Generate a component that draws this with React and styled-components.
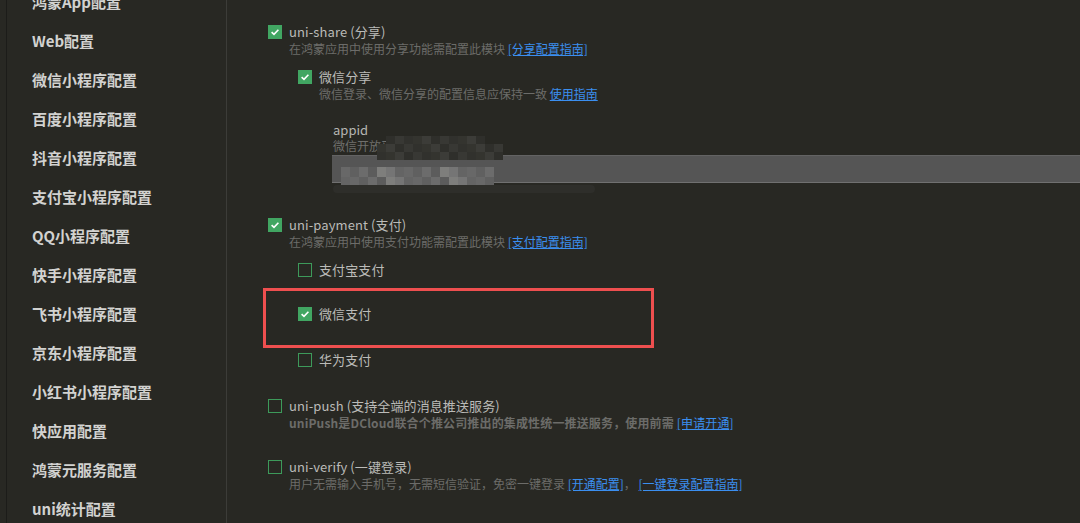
import React from "react"
import styled, { createGlobalStyle } from "styled-components"

const GlobalStyle = createGlobalStyle`
  html, body {
    margin: 0;
    padding: 0;
    background: #282823;
    overflow: hidden;
  }
  * {
    box-sizing: border-box;
  }
`

const font = `"Noto Sans CJK SC", "Noto Sans", "Liberation Sans", sans-serif`

const Page = styled.div`
  display: flex;
  height: 523px;
  width: 1080px;
  overflow: hidden;
  padding-left: 6px;
  background: #282823;
  font-family: ${font};
`

const Sidebar = styled.nav`
  width: 221px;
  flex-shrink: 0;
  border-left: 1px solid #1c1c19;
  border-right: 1px solid #3c3c38;
  padding-left: 25px;
  overflow: hidden;
`

const NavList = styled.ul`
  list-style: none;
  margin: -18px 0 0;
  padding: 0;
`

const NavItem = styled.li`
  height: 39px;
  line-height: 39px;
  font-size: 15px;
  font-weight: 700;
  color: #d2d2d0;
  white-space: nowrap;
`

const Content = styled.main`
  flex: 1;
  padding: 24px 0 0 41px;
  overflow: hidden;
`

const Block = styled.section`
  margin-top: ${p => p.$top || 0}px;
  margin-left: ${p => p.$indent || 0}px;
`

const Row = styled.div`
  display: flex;
  align-items: center;
  gap: 7px;
  height: 16px;
`

const Box = styled.span`
  width: 14px;
  height: 14px;
  flex-shrink: 0;
  display: inline-flex;
  align-items: center;
  justify-content: center;
  background: ${p => (p.$checked ? "#41a662" : "transparent")};
  border: 1px solid ${p => (p.$checked ? "#41a662" : "#3d9a5a")};
`

const Label = styled.span`
  font-size: 13px;
  line-height: 16px;
  color: #bbbbb8;
  white-space: nowrap;
  letter-spacing: 0.1px;
`

const Desc = styled.div`
  margin-left: 21px;
  font-size: 12px;
  line-height: 18px;
  color: #6c6c69;
  font-weight: ${p => (p.$bold ? 700 : 400)};
  letter-spacing: ${p => (p.$bold ? "0.15px" : "0")};
  white-space: nowrap;
`

const DocLink = styled.a`
  color: #3b8ff0;
  text-decoration: underline;
  font-weight: 400;
  cursor: pointer;
`

const Field = styled.div`
  position: relative;
  margin: 19px 0 0 35px;
`

const FieldLabel = styled.div`
  font-size: 13px;
  line-height: 16px;
  color: #b5b5b2;
`

const FieldHint = styled.div`
  font-size: 12px;
  line-height: 16px;
  color: #6f6f6c;
`

const Input = styled.div`
  margin-top: 1px;
  margin-left: -1px;
  height: 28px;
  width: 760px;
  background: #555555;
  border-top: 1px solid #636363;
  border-bottom: 1px solid #707070;
`

const Mosaic = styled.svg`
  position: absolute;
  left: -1px;
  top: 12px;
  pointer-events: none;
`

const Highlight = styled.div`
  margin: 10px 0 0 -35px;
  width: 391px;
  border: 3px solid #ee4f4f;
  padding: 15px 0 23px 32px;
`

const Check = () => (
  <svg width="10" height="10" viewBox="0 0 10 10">
    <polyline
      points="1.6,5.2 4,7.4 8.4,2.8"
      fill="none"
      stroke="#ffffff"
      strokeWidth="1.6"
    />
  </svg>
)

const Checkbox = ({ checked }) => (
  <Box $checked={checked}>{checked && <Check />}</Box>
)

const Option = ({ checked, label, top, indent, children }) => (
  <Block $top={top} $indent={indent}>
    <Row>
      <Checkbox checked={checked} />
      <Label>{label}</Label>
    </Row>
    {children}
  </Block>
)

const navItems = [
  "鸿蒙App配置",
  "Web配置",
  "微信小程序配置",
  "百度小程序配置",
  "抖音小程序配置",
  "支付宝小程序配置",
  "QQ小程序配置",
  "快手小程序配置",
  "飞书小程序配置",
  "京东小程序配置",
  "小红书小程序配置",
  "快应用配置",
  "鸿蒙元服务配置",
  "uni统计配置",
]

// pixelated blur over the appid value
const cells = []
const shades = ["#2f2f2b", "#34342f", "#383834", "#3c3c38", "#31312d"]
const light = ["#5c5c5c", "#646464", "#6c6c6c", "#757575", "#606060", "#7e7e7c", "#686868"]
for (let r = 0; r < 5; r++) {
  for (let c = 0; c < 18; c++) {
    const x = 9 + c * 9
    if (r < 3) {
      if (r === 0 && (x < 50 || x > 150)) continue
      if (r > 0 && x < 42) continue
      cells.push({ x, y: r * 8, h: 8, fill: shades[(c * 7 + r * 3) % shades.length] })
    } else {
      if (x > 155) continue
      cells.push({ x, y: 31 + (r - 3) * 10, h: 10, fill: light[(c * 5 + r * 2) % light.length] })
    }
  }
}

const MosaicBlur = () => (
  <Mosaic width="280" height="64" viewBox="0 0 280 64">
    {cells.map((c, i) => (
      <rect key={i} x={c.x} y={c.y + 2} width="9" height={c.h} fill={c.fill} />
    ))}
    <rect x="1" y="51" width="262" height="8" rx="4" fill="#2e2e2a" />
  </Mosaic>
)

const App = () => {
  return (
    <Page>
      <GlobalStyle />
      <Sidebar>
        <NavList>
          {navItems.map(item => (
            <NavItem key={item}>{item}</NavItem>
          ))}
        </NavList>
      </Sidebar>
      <Content>
        <Option checked label="uni-share (分享)">
          <Desc>
            在鸿蒙应用中使用分享功能需配置此模块 <DocLink>[分享配置指南]</DocLink>
          </Desc>
          <Option checked label="微信分享" top={11} indent={30}>
            <Desc>
              微信登录、微信分享的配置信息应保持一致 <DocLink>使用指南</DocLink>
            </Desc>
            <Field>
              <FieldLabel>appid</FieldLabel>
              <FieldHint>微信开放平台应用appid</FieldHint>
              <Input />
              <MosaicBlur />
            </Field>
          </Option>
        </Option>

        <Option checked label="uni-payment (支付)" top={34}>
          <Desc>
            在鸿蒙应用中使用支付功能需配置此模块 <DocLink>[支付配置指南]</DocLink>
          </Desc>
          <Option label="支付宝支付" top={11} indent={30} />
          <Block $indent={30}>
            <Highlight>
              <Row>
                <Checkbox checked />
                <Label>微信支付</Label>
              </Row>
            </Highlight>
          </Block>
          <Option label="华为支付" top={4} indent={30} />
        </Option>

        <Option label="uni-push (支持全端的消息推送服务)" top={30}>
          <Desc $bold>
            uniPush是DCloud联合个推公司推出的集成性统一推送服务，使用前需{" "}
            <DocLink>[申请开通]</DocLink>
          </Desc>
        </Option>

        <Option label="uni-verify (一键登录)" top={27}>
          <Desc>
            用户无需输入手机号，无需短信验证，免密一键登录 <DocLink>[开通配置]</DocLink>，
            {"  "}
            <DocLink>[一键登录配置指南]</DocLink>
          </Desc>
        </Option>
      </Content>
    </Page>
  )
}

export default App
